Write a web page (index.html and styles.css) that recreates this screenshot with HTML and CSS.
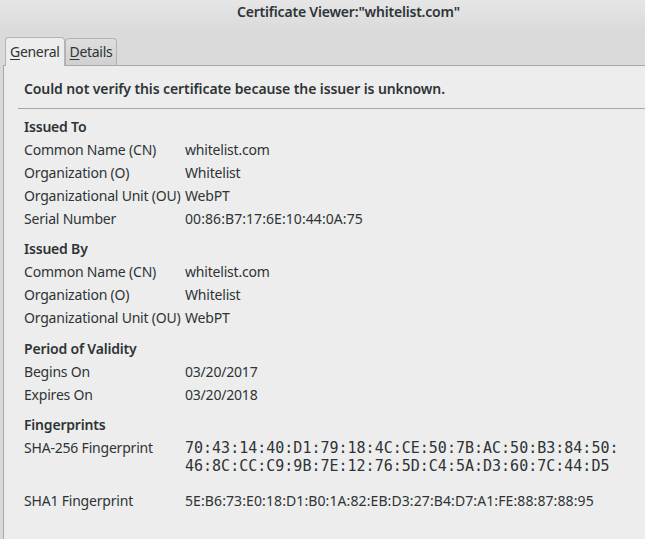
FILE: index.html
```html
<!DOCTYPE html>
<html>
<head>
<meta charset="utf-8">
<link rel="stylesheet" href="styles.css">
</head>
<body>
<div class="window">
  <div class="titlebar"><span class="title">Certificate Viewer:"whitelist.com"</span></div>
  <div class="tabs">
    <div class="tab active"><u>G</u>eneral</div>
    <div class="tab"><u>D</u>etails</div>
  </div>
  <div class="panel">
    <div class="warning">Could not verify this certificate because the issuer is unknown.</div>
    <div class="sep"></div>
    <div class="section">
      <div class="heading">Issued To</div>
      <div class="grid">
        <div class="label">Common Name (CN)</div><div class="value">whitelist.com</div>
        <div class="label">Organization (O)</div><div class="value">Whitelist</div>
        <div class="label">Organizational Unit (OU)</div><div class="value">WebPT</div>
        <div class="label">Serial Number</div><div class="value hex">00:86:B7:17:6E:10:44:0A:75</div>
      </div>
    </div>
    <div class="section">
      <div class="heading">Issued By</div>
      <div class="grid">
        <div class="label">Common Name (CN)</div><div class="value">whitelist.com</div>
        <div class="label">Organization (O)</div><div class="value">Whitelist</div>
        <div class="label">Organizational Unit (OU)</div><div class="value">WebPT</div>
      </div>
    </div>
    <div class="section validity">
      <div class="heading">Period of Validity</div>
      <div class="grid">
        <div class="label">Begins On</div><div class="value">03/20/2017</div>
        <div class="label">Expires On</div><div class="value">03/20/2018</div>
      </div>
    </div>
    <div class="section">
      <div class="heading">Fingerprints</div>
      <div class="grid">
        <div class="label">SHA-256 Fingerprint</div><div class="value mono">70:43:14:40:D1:79:18:4C:CE:50:7B:AC:50:B3:84:50:<br>46:8C:CC:C9:9B:7E:12:76:5D:C4:5A:D3:60:7C:44:D5</div>
        <div class="label sha1">SHA1 Fingerprint</div><div class="value sha1 hex-wide">5E:B6:73:E0:18:D1:B0:1A:82:EB:D3:27:B4:D7:A1:FE:88:87:88:95</div>
      </div>
    </div>
  </div>
</div>
</body>
</html>
```

FILE: styles.css
```css
html, body {
  margin: 0;
  padding: 0;
  width: 645px;
  height: 539px;
  overflow: hidden;
}
body {
  font-family: "Noto Sans", "DejaVu Sans", sans-serif;
  color: #2e3436;
  background: #d9d9d9;
}
.window {
  display: flex;
  flex-direction: column;
  height: 539px;
}
.titlebar {
  height: 26px;
  box-sizing: border-box;
  padding-bottom: 3px;
  background: linear-gradient(#e6e6e6, #dcdcdc);
  display: flex;
  align-items: center;
  padding-left: 237px;
}
.title {
  font-size: 14px;
  font-weight: 600;
  color: #2e3436;
  letter-spacing: -0.2px;
}
.tabs {
  display: flex;
  align-items: flex-end;
  height: 39px;
  padding-left: 5px;
  background: #dadada;
}
.tab {
  font-size: 14px;
  line-height: 20px;
  padding: 3px 4px 3px 4px;
  border: 1px solid #b3b3b3;
  border-bottom: none;
  border-radius: 4px 4px 0 0;
  background: linear-gradient(#dedede, #d0d0d0);
  color: #2e3436;
  letter-spacing: -0.3px;
}
.tab.active {
  background: #ededed;
  padding-top: 4px;
  padding-bottom: 4px;
  position: relative;
  top: 1px;
  z-index: 1;
}
.tab u {
  text-decoration-thickness: 1px;
  text-underline-offset: 2px;
}
.panel {
  flex: 1;
  margin-left: 3px;
  background: #ededed;
  border-top: 1px solid #a8a8a8;
  border-left: 1px solid #a8a8a8;
  padding-left: 14px;
}
.warning {
  font-size: 14px;
  font-weight: 600;
  padding: 13px 0 0 6px;
  line-height: 20px;
  height: 29px;
  letter-spacing: -0.1px;
}
.sep {
  height: 1px;
  background: #a8a8a8;
  margin-bottom: 6px;
}
.section {
  padding-left: 6px;
  margin-bottom: 7px;
}
.section.validity {
  padding-top: 1px;
}
.heading {
  font-size: 14px;
  font-weight: 600;
  line-height: 23px;
  letter-spacing: -0.2px;
}
.grid {
  display: grid;
  grid-template-columns: 161px 1fr;
  font-size: 14px;
  line-height: 23px;
  letter-spacing: -0.2px;
}
.value.hex {
  letter-spacing: 0.07px;
}
.value.hex-wide {
  letter-spacing: 0.1px;
}
.value.mono {
  font-family: "DejaVu Sans Mono", monospace;
  font-size: 15px;
  line-height: 18px;
  letter-spacing: 0;
  padding-top: 3px;
}
.sha1 {
  padding-top: 14px;
}
```
